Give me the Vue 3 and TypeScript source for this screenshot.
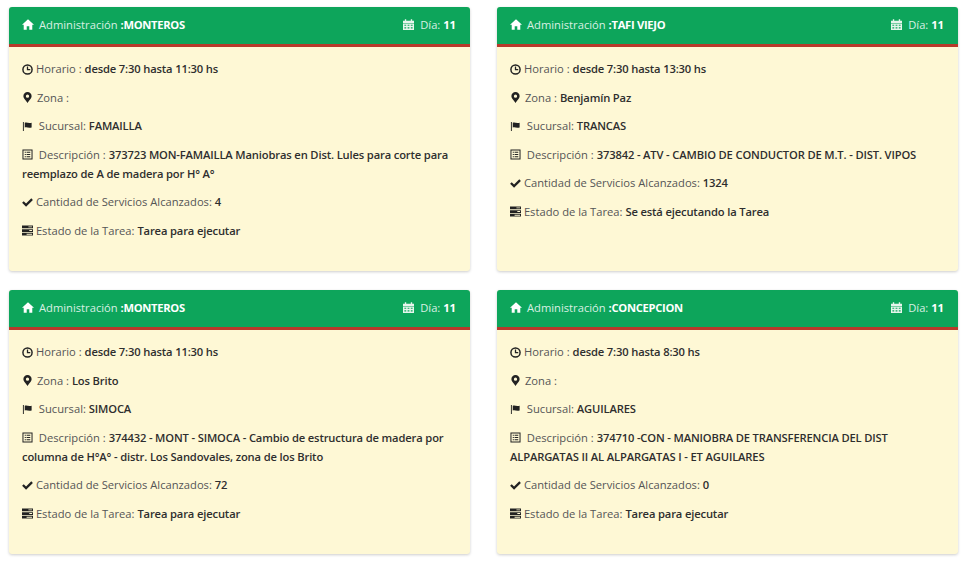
<script setup lang="ts">
interface Card {
  admin: string
  horario: string
  zona: string
  sucursal: string
  descripcion: string
  cantidad: string
  estado: string
}

const cards: Card[] = [
  { admin: 'MONTEROS', horario: 'desde 7:30 hasta 11:30 hs', zona: '', sucursal: 'FAMAILLA', descripcion: '373723 MON-FAMAILLA Maniobras en Dist. Lules para corte para reemplazo de A de madera por H° A°', cantidad: '4', estado: 'Tarea para ejecutar' },
  { admin: 'TAFI VIEJO', horario: 'desde 7:30 hasta 13:30 hs', zona: 'Benjamín Paz', sucursal: 'TRANCAS', descripcion: '373842 - ATV - CAMBIO DE CONDUCTOR DE M.T. - DIST. VIPOS', cantidad: '1324', estado: 'Se está ejecutando la Tarea' },
  { admin: 'MONTEROS', horario: 'desde 7:30 hasta 11:30 hs', zona: 'Los Brito', sucursal: 'SIMOCA', descripcion: '374432 - MONT - SIMOCA - Cambio de estructura de madera por columna de H°A° - distr. Los Sandovales, zona de los Brito', cantidad: '72', estado: 'Tarea para ejecutar' },
  { admin: 'CONCEPCION', horario: 'desde 7:30 hasta 8:30 hs', zona: '', sucursal: 'AGUILARES', descripcion: '374710 -CON - MANIOBRA DE TRANSFERENCIA DEL DIST ALPARGATAS II AL ALPARGATAS I - ET AGUILARES', cantidad: '0', estado: 'Tarea para ejecutar' },
]
</script>

<template>
  <div class="grid">
    <section v-for="(c, i) in cards" :key="i" class="card">
      <header class="head">
        <span class="head-left">
          <svg class="ico home" viewBox="0 0 14 12"><path d="M7 0 L14 6.3 H12 V12 H8.5 V8 H5.5 V12 H2 V6.3 H0 Z" /></svg>
          <span>Administración <b class="admin">:{{ c.admin }}</b></span>
        </span>
        <span class="head-right">
          <svg class="ico cal" viewBox="0 0 12 12"><path fill-rule="evenodd" d="M0 1.5 H2 V0 H3.5 V1.5 H8.5 V0 H10 V1.5 H12 V4 H0 Z M0 4.6 H12 V12 H0 Z M1.5 6 V7.200 H3.5 V6 Z M5 6 V7.200 H7 V6 Z M8.500 6 V7.200 H10.500 V6 Z M1.500 8.800 V10 H3.500 V8.800 Z M5 8.800 V10 H7 V8.800 Z M8.500 8.800 V10 H10.500 V8.800 Z" /></svg>
          <span>Día: <b class="dia">11</b></span>
        </span>
      </header>
      <div class="body">
        <p>
          <svg class="ico" viewBox="0 0 12 12"><circle cx="6" cy="6" r="5" fill="none" stroke="currentColor" stroke-width="1.6" /><path d="M5.3 2.8 H6.7 V5.5 H9 V6.9 H5.3 Z" /></svg>
          Horario : <b>{{ c.horario }}</b>
        </p>
        <p>
          <svg class="ico pin" viewBox="0 0 10 12"><path fill-rule="evenodd" d="M5 0 A4.6 4.6 0 0 1 9.6 4.6 C9.6 7 6.5 9.6 5 12 C3.5 9.6 .4 7 .4 4.6 A4.6 4.6 0 0 1 5 0 Z M5 2.8 A1.8 1.8 0 1 0 5 6.4 A1.8 1.8 0 1 0 5 2.8 Z" /></svg>
          Zona : <b>{{ c.zona }}</b>
        </p>
        <p>
          <svg class="ico flag" viewBox="0 0 12 12"><path d="M1 1 H2 V11 H1 Z M3 2 C5 1 7 2.800 10.500 1.800 V7 C7 8 5 6.200 3 7.200 Z" /></svg>
          &nbsp;Sucursal: <b>{{ c.sucursal }}</b>
        </p>
        <p>
          <svg class="ico list" viewBox="0 0 12 12"><path fill-rule="evenodd" d="M.5 .5 H11.500 V11.500 H.5 Z M1.600 1.600 V10.400 H10.400 V1.600 Z M3 3 H4.200 V4.200 H3 Z M5 3 H9 V4.200 H5 Z M3 5.400 H4.200 V6.600 H3 Z M5 5.400 H9 V6.600 H5 Z M3 7.800 H4.200 V9 H3 Z M5 7.800 H9 V9 H5 Z" /></svg>
          &nbsp;Descripción : <b>{{ c.descripcion }}</b>
        </p>
        <p>
          <svg class="ico ok" viewBox="0 0 12 10"><path d="M0 5.400 L1.800 3.600 L4.400 6.200 L10.200 .4 L12 2.200 L4.400 9.800 Z" /></svg>
          Cantidad de Servicios Alcanzados: <b>{{ c.cantidad }}</b>
        </p>
        <p>
          <svg class="ico tasks" viewBox="0 0 12 11"><path fill-rule="evenodd" d="M0 0 H12 V3 H0 Z M0 4 H12 V7 H0 Z M8 4.900 V6.100 H11 V4.900 Z M0 8 H12 V11 H0 Z M7 1 V2 H11 V1 Z M5 9 V10 H11 V9 Z" /></svg>
          Estado de la Tarea: <b>{{ c.estado }}</b>
        </p>
      </div>
    </section>
  </div>
</template>

<style scoped>
.grid {
  display: grid;
  grid-template-columns: 461px 461px;
  grid-auto-rows: 264px;
  column-gap: 27px;
  row-gap: 19px;
  padding: 7px 0 10px 9px;
  font-family: "Open Sans", sans-serif;
  font-size: 11.2px;
  line-height: 19px;
  color: #555;
}
.card {
  background: #fef8d5;
  border-radius: 3px;
  box-shadow: 0 1px 3px rgba(0, 0, 0, 0.2);
  overflow: hidden;
}
.head {
  box-sizing: content-box;
  height: 35px;
  background: #0da55b;
  border-bottom: 3px solid #b73a2b;
  color: #d9f0e3;
  display: flex;
  align-items: center;
  justify-content: space-between;
  padding: 0 14px 2px 13px;
}
.head-left,
.head-right {
  display: flex;
  align-items: center;
}
.admin {
  font-weight: 700;
  color: #fff;
  letter-spacing: -0.3px;
}
.dia {
  font-weight: 700;
  color: #fff;
}
.body {
  padding: 12px 13px 0;
}
.body p {
  margin: 0 0 9.5px;
}
.body b {
  font-weight: 600;
  letter-spacing: -0.15px;
  color: #2e2e2e;
}
.ico {
  display: inline-block;
  width: 11px;
  height: 11px;
  fill: currentColor;
  vertical-align: -1.5px;
  color: #222;
}
.head .home {
  width: 12px;
  height: 11px;
  margin-right: 5px;
  color: #fff;
}
.head .cal {
  width: 11px;
  height: 11.5px;
  margin-right: 6.5px;
  color: #e6f5ec;
}
.pin {
  width: 9px;
  margin: 0 2px 0 1px;
}
.ok {
  width: 11px;
  height: 9px;
  vertical-align: -0.5px;
}
</style>
